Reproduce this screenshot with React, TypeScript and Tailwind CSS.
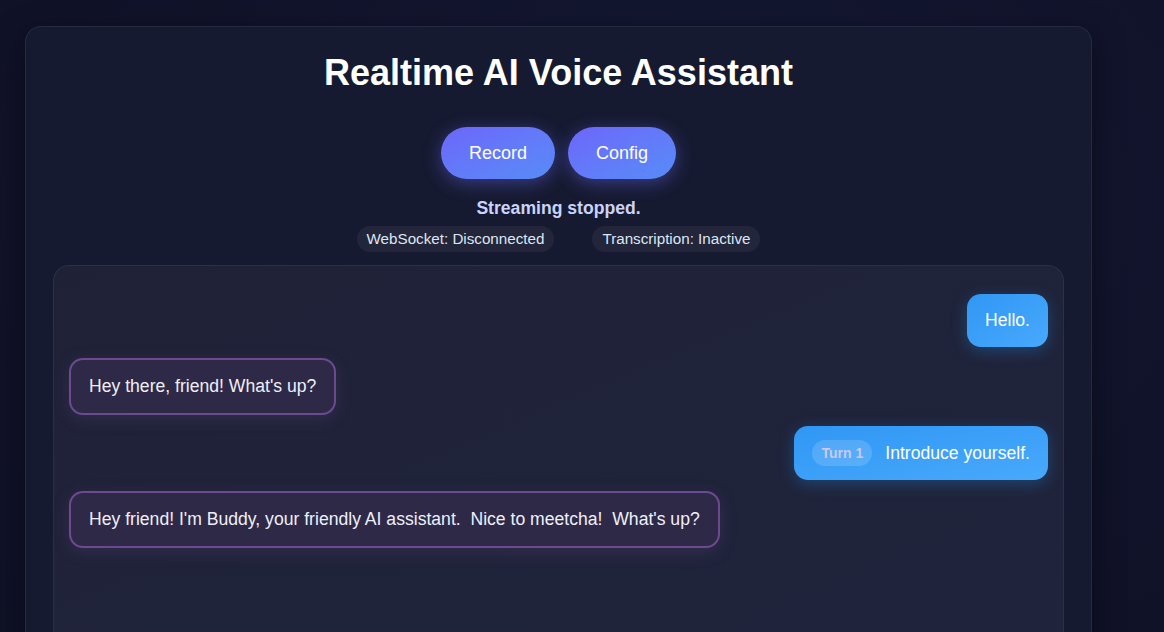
const messages = [
  { role: "user", text: "Hello." },
  { role: "assistant", text: "Hey there, friend! What's up?" },
  { role: "user", text: "Introduce yourself.", turn: 1 },
  { role: "assistant", text: "Hey friend! I'm Buddy, your friendly AI assistant.  Nice to meetcha!  What's up?" },
];

export default function App() {
  return (
    <div className="min-h-screen w-full overflow-hidden bg-[radial-gradient(ellipse_at_60%_30%,#161a36_0%,#11132a_55%,#0f1126_100%)] font-['Liberation_Sans',Arial,sans-serif]">
      <div className="ml-[25px] mt-[26px] w-[1067px] rounded-t-[16px] border border-b-0 border-[#262a40] bg-[#161a30] px-[27px] pt-[25px] shadow-[0_10px_30px_rgba(5,6,18,0.6)]">
        <h1 className="text-center text-[36px] font-bold leading-[42px] text-white">
          Realtime AI Voice Assistant
        </h1>

        <div className="mt-[33px] flex justify-center gap-[13px]">
          {["Record", "Config"].map((label) => (
            <button
              key={label}
              className="h-[52px] rounded-full bg-gradient-to-br from-[#6c66fa] to-[#568cf8] px-7 text-[18px] text-white shadow-[0_4px_18px_rgba(99,102,241,0.45)]"
            >
              {label}
            </button>
          ))}
        </div>

        <p className="mt-[19px] text-center text-[17.6px] font-bold leading-[20px] text-[#c9d3fb]">
          Streaming stopped.
        </p>

        <div className="mt-[8px] flex justify-center gap-[38px]">
          <span className="rounded-full bg-[#23263b] px-[10px] py-[5px] text-[15.2px] leading-4 text-[#dde5f2]">
            WebSocket: Disconnected
          </span>
          <span className="rounded-full bg-[#23263b] px-[10px] py-[5px] text-[15.2px] leading-4 text-[#dde5f2]">
            Transcription: Inactive
          </span>
        </div>

        <div className="mt-[13px] flex min-h-[420px] flex-col gap-[11px] rounded-t-[16px] border border-b-0 border-[#2c3047] bg-gradient-to-br from-[#1f2237] to-[#20243c] px-[15px] pt-[28px]">
          {messages.map((m, i) =>
            m.role === "user" ? (
              <div key={i} className="flex justify-end">
                <div
                  className={`flex items-center gap-[13px] rounded-[14px] bg-gradient-to-br from-[#2f97f4] to-[#48a9fc] px-[18px] text-[17.6px] leading-[21px] text-white shadow-[0_4px_16px_rgba(33,150,243,0.3)] ${
                    m.turn ? "py-[14px]" : "py-4"
                  }`}
                >
                  {m.turn && (
                    <span className="rounded-full bg-white/15 px-[9px] py-[5px] text-[14px] font-bold leading-4 text-[#c8caf8]">
                      Turn {m.turn}
                    </span>
                  )}
                  <span>{m.text}</span>
                </div>
              </div>
            ) : (
              <div key={i} className="flex justify-start">
                <div className="whitespace-pre rounded-[14px] border-2 border-[#6b4a90] bg-[#2f2948] px-[18px] py-4 text-[17.6px] leading-[21px] text-[#eef0f8] shadow-[0_4px_16px_rgba(107,74,144,0.25)]">
                  {m.text}
                </div>
              </div>
            )
          )}
        </div>
      </div>
    </div>
  );
}
